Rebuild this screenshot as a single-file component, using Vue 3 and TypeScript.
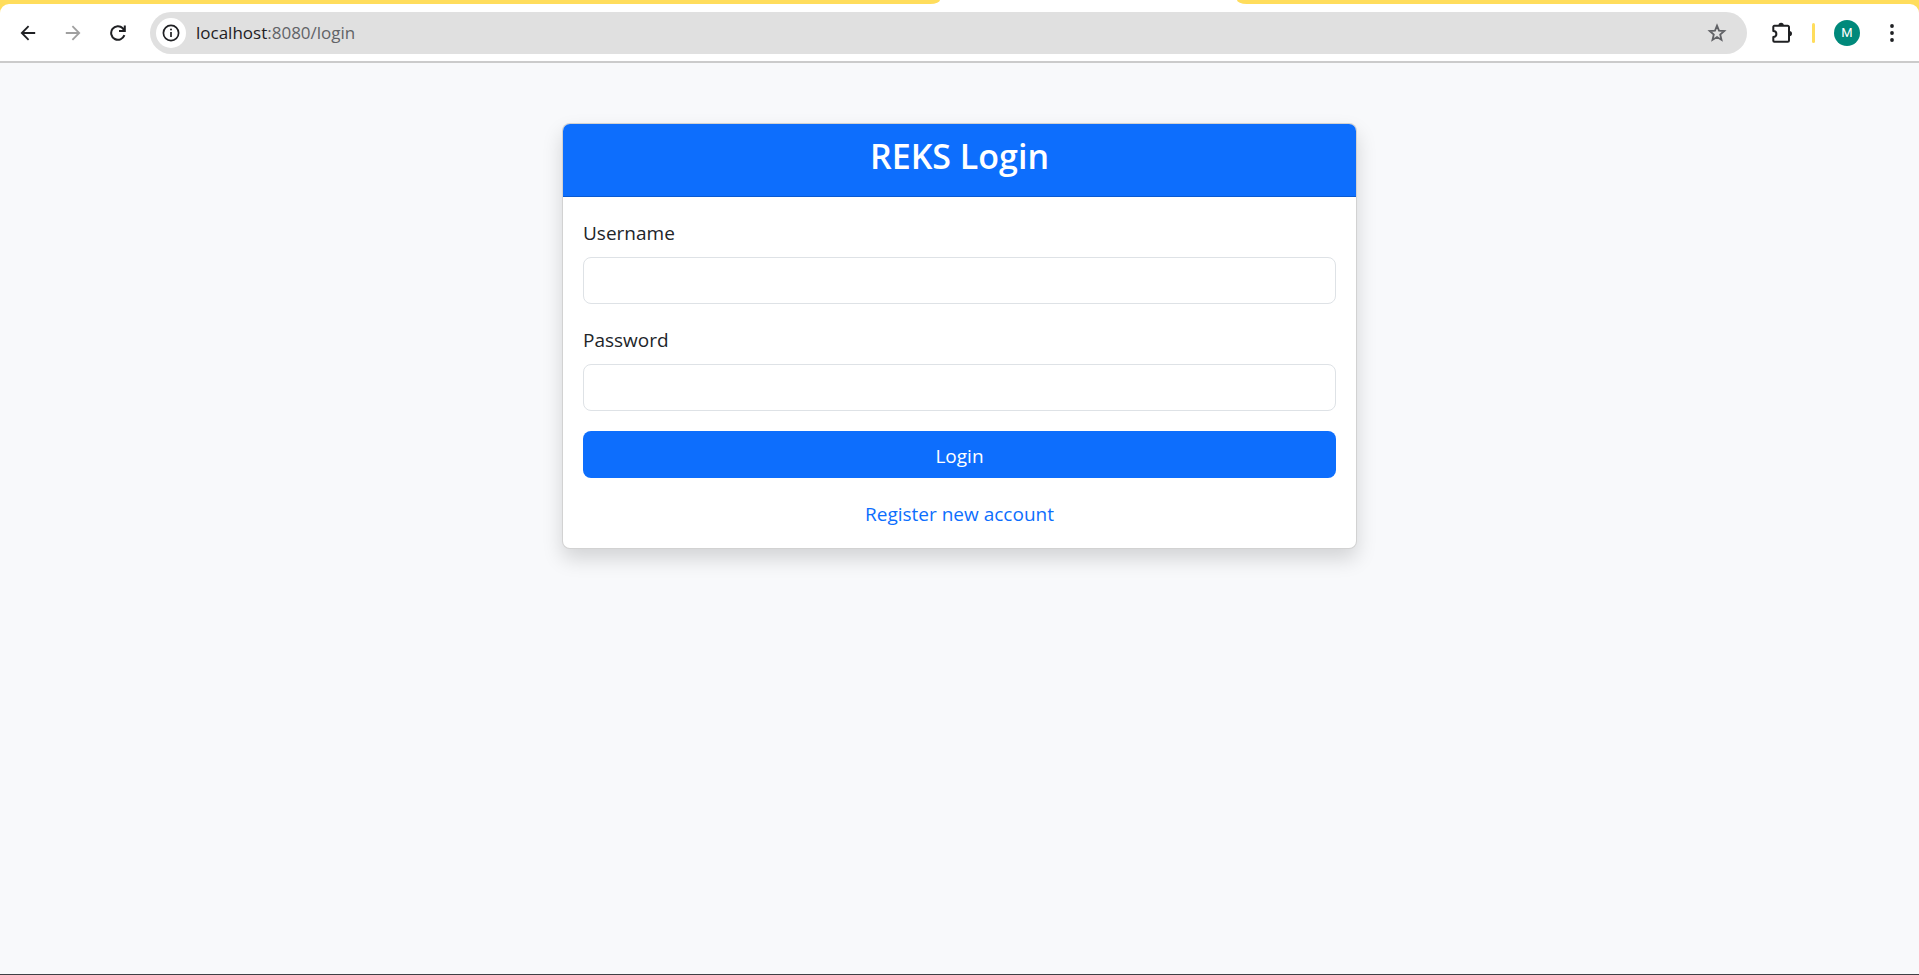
<script setup lang="ts">
import { ref } from 'vue'

const username = ref('')
const password = ref('')
</script>

<template>
  <div class="window">
    <div class="tabstrip">
      <div class="inactive left"></div>
      <div class="active-tab"></div>
      <div class="inactive right"></div>
    </div>
    <div class="toolbar-back">
      <header class="toolbar">
        <button class="tool" type="button" aria-label="Back">
          <svg width="16" height="16" viewBox="0 0 16 16" fill="none" stroke="#1f2023" stroke-width="1.8">
            <path d="M15.2 8H2M8.6 1.2 1.8 8l6.8 6.8" />
          </svg>
        </button>
        <button class="tool" type="button" aria-label="Forward">
          <svg width="16" height="16" viewBox="0 0 16 16" fill="none" stroke="#a0a0a0" stroke-width="1.8">
            <path d="M.8 8H14M7.4 1.2 14.2 8l-6.8 6.8" />
          </svg>
        </button>
        <button class="tool" type="button" aria-label="Reload">
          <svg width="16" height="16" viewBox="0 0 16 16" fill="none" stroke="#1f2023" stroke-width="2">
            <path d="M14.4 10.2A6.8 6.8 0 1 1 12.8 3.2L14.6 5.4" />
            <path d="M14.8 .4V6H9" />
            <path d="M14.8 2.2V6H11Z" fill="#1f2023" stroke="none" />
          </svg>
        </button>
        <div class="address">
          <button class="info" type="button" aria-label="View site information">
            <svg width="18" height="18" viewBox="0 0 18 18">
              <circle cx="9" cy="9" r="7.6" fill="none" stroke="#1f2023" stroke-width="1.7" />
              <path d="M9 7.9v5" stroke="#1f2023" stroke-width="1.7" />
              <circle cx="9" cy="5.5" r="1" fill="#1f2023" />
            </svg>
          </button>
          <span class="url"><span class="host">localhost</span>:8080/login</span>
          <button class="star" type="button" aria-label="Bookmark this page">
            <svg width="20" height="20" viewBox="0 0 20 20" fill="none" stroke="#606165" stroke-width="1.8" stroke-linejoin="miter">
              <path d="M10 2.6 12 7.6 17.3 8 13.2 11.5 14.5 16.9 10 14 5.5 16.9 6.8 11.5 2.7 8 8 7.6Z" />
            </svg>
          </button>
        </div>
        <button class="extensions" type="button" aria-label="Extensions">
          <svg width="22" height="22" viewBox="0 0 22 22">
            <path d="M3.3 3.8H16.7a1.3 1.3 0 0 1 1.3 1.3V18.4a1.3 1.3 0 0 1-1.3 1.3H3.3a1 1 0 0 1-1-1V15C6.4 14.8 6.4 9.3 2.3 9.1V4.8a1 1 0 0 1 1-1Z" fill="none" stroke="#1f2023" stroke-width="2" stroke-linejoin="round" />
            <path d="M7.4 3.4a2.7 2.7 0 0 1 5.4 0ZM18.4 9a2.6 2.6 0 0 1 0 5.2Z" fill="#1f2023" />
          </svg>
        </button>
        <span class="divider"></span>
        <button class="avatar" type="button" aria-label="Profile M">M</button>
        <button class="menu" type="button" aria-label="Menu">
          <svg width="4" height="18" viewBox="0 0 4 18" fill="#1f2023">
            <circle cx="2" cy="2" r="1.9" /><circle cx="2" cy="9" r="1.9" /><circle cx="2" cy="16" r="1.9" />
          </svg>
        </button>
      </header>
    </div>

    <main class="page">
      <section class="card">
        <div class="card-header"><h3>REKS Login</h3></div>
        <form class="card-body" @submit.prevent>
          <label for="username">Username</label>
          <input id="username" v-model="username" type="text" autocomplete="username" />
          <label for="password">Password</label>
          <input id="password" v-model="password" type="password" autocomplete="current-password" />
          <button class="submit" type="submit">Login</button>
          <a href="#register">Register new account</a>
        </form>
      </section>
    </main>
  </div>
</template>

<style>
body {
  margin: 0;
}
</style>

<style scoped>
.window,
.window * {
  box-sizing: border-box;
}

.window {
  display: flex;
  flex-direction: column;
  min-height: 100vh;
  background: #f8f9fb;
  border-bottom: 1px solid #3f4045;
  color: #212529;
  font-family: "Segoe UI", "Open Sans", "Noto Sans", sans-serif;
}

button {
  display: flex;
  align-items: center;
  justify-content: center;
  flex: none;
  padding: 0;
  border: 0;
  background: none;
  font-family: inherit;
  cursor: pointer;
}

.tabstrip {
  display: flex;
  height: 4px;
  background: #fff;
}

.inactive {
  background: #ffdd5c;
}

.inactive.left {
  width: 49%;
  border-bottom-right-radius: 12px 5px;
}

.active-tab {
  width: 297px;
}

.inactive.right {
  flex: 1;
  border-bottom-left-radius: 12px 5px;
}

.toolbar-back {
  background: linear-gradient(90deg, #ffdd5c 10px, #fff 10px, #fff calc(100% - 10px), #ffdd5c calc(100% - 10px));
}

.toolbar {
  display: flex;
  align-items: center;
  height: 59px;
  padding: 0 7px 0 5px;
  background: #fff;
  border-bottom: 2px solid #cbcbcb;
  border-radius: 9px 9px 0 0;
}

.tool {
  width: 45px;
  height: 40px;
}

.address {
  display: flex;
  align-items: center;
  flex: 1;
  height: 42px;
  margin: 1px 15px 0 10px;
  padding: 0 20px 0 6px;
  border-radius: 21px;
  background: #e0e0e0;
}

.info {
  width: 30px;
  height: 30px;
  border-radius: 50%;
  background: #fff;
}

.url {
  flex: 1;
  margin-left: 10px;
  color: #626367;
  font-size: 17px;
  line-height: 24px;
}

.host {
  color: #1f2023;
}

.extensions {
  width: 40px;
  height: 40px;
}

.divider {
  width: 3px;
  height: 20px;
  margin: 0 19px 0 10px;
  border-radius: 2px;
  background: #ffdd5c;
}

.avatar {
  width: 26px;
  height: 26px;
  margin-right: 12px;
  border-radius: 50%;
  background: #00897b;
  color: #fff;
  font-family: Roboto, sans-serif;
  font-size: 13px;
}

.menu {
  width: 40px;
  height: 40px;
}

.page {
  flex: 1;
  width: 100%;
  max-width: 1650px;
  margin: 0 auto;
  padding: 60px 15px;
}

.card {
  width: calc(50% - 15px);
  min-width: 320px;
  margin: 0 auto;
  border: 1px solid rgba(0, 0, 0, 0.175);
  border-radius: 8px;
  background: #fff;
  box-shadow: 0 10px 20px rgba(0, 0, 0, 0.15);
}

.card-header {
  padding: 10px 20px;
  border-bottom: 1px solid rgba(0, 0, 0, 0.175);
  border-radius: 7px 7px 0 0;
  background: #0d6efd;
  color: #fff;
  text-align: center;
}

h3 {
  margin: 0 0 8px;
  font-size: 34px;
  font-weight: 600;
  line-height: 44px;
}

.card-body {
  display: flex;
  flex-direction: column;
  padding: 20px 20px 18px;
  font-size: 19px;
  line-height: 32px;
}

label {
  align-self: flex-start;
  margin-bottom: 8px;
}

input {
  width: 100%;
  height: 47px;
  margin: 0 0 20px;
  padding: 8px 15px;
  border: 1px solid #dee2e6;
  border-radius: 8px;
  background: #fff;
  color: inherit;
  font: inherit;
}

.submit {
  height: 47px;
  margin-bottom: 20px;
  padding-top: 2px;
  border-radius: 8px;
  background: #0d6efd;
  color: #fff;
  font-size: 19px;
}

a {
  align-self: center;
  color: #0d6efd;
  text-decoration: none;
}
</style>
